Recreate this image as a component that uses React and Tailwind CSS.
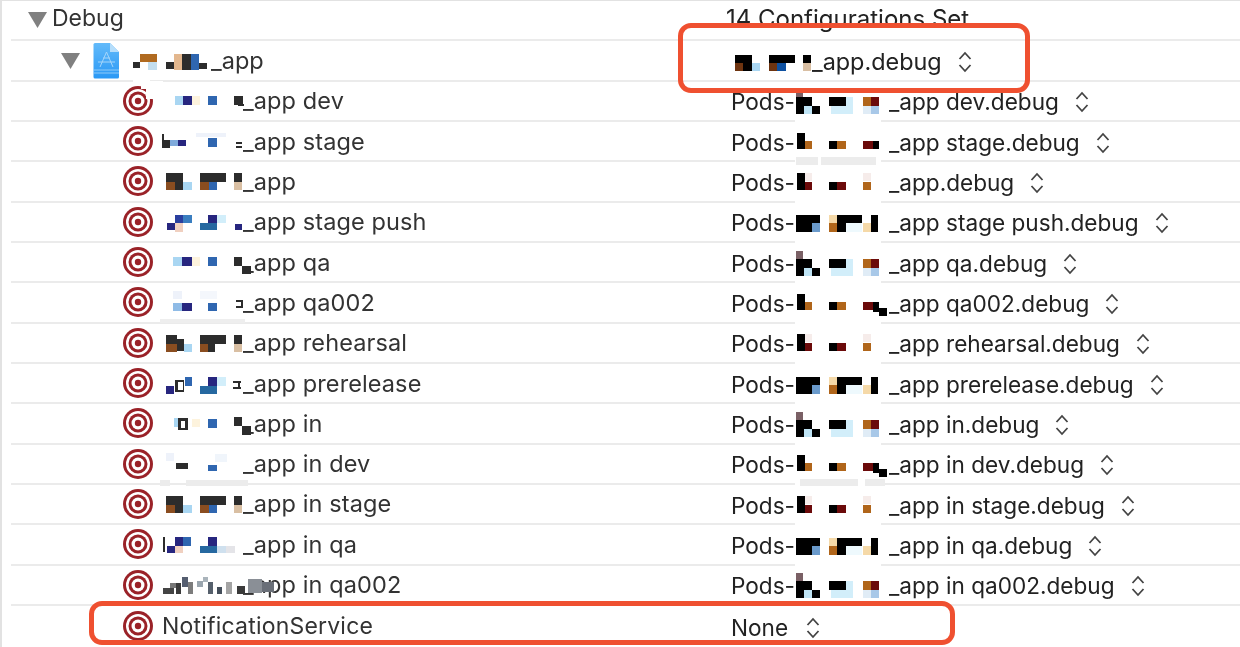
import React from "react";

const D = "#2c2c2c", B = "#000000", BR = "#8a4d20", PB = "#a9d6f2", NV = "#27267f", CR = "#fdf3dd", BL = "#2f66b0", TN = "#d9bfa3", TL = "#2668a0", PE = "#f5d9a8", OR = "#b0651a", RD = "#6b0a0a", PL = "#d2eefa", MV = "#7a6065", W = "#ffffff", G = "#ececec", PK = "#f6ecea";

const rC = [[166,-8,17,9,D],[166,1,9,8,BR],[175,1,8,8,D],[183,1,9,8,PB],[200,-8,26,9,D],[200,1,9,8,BR],[209,1,8,8,BL],[234,-8,8,9,D],[234,1,8,8,TN]];

const L = [
  [[133,-22,17,5,W],[146,-16,8,14,W],[141,-16,13,4,W],[175,-5,8,9,PB],[183,-5,9,9,NV],[192,-5,8,9,CR],[208,-5,9,9,BL],[234,-5,9,9,D],[238,3,6,2,D],[145,-20,18,3,W]],
  [[162,-7,2,14,D],[164,-1,6,8,D],[170,-1,8,6,"#7faadc"],[178,-1,8,6,NV],[208,-3,9,9,BL],[196,-8,30,4,"#eef2fa"],[235,-1,8,8,W],[236,1,6,2,D],[236,5,6,2,D]],
  rC,
  [[167,1,8,7,NV],[175,-7,8,8,"#2a3f9f"],[183,-7,9,8,"#3a7ec0"],[175,1,8,9,"#f0d0c0"],[200,1,8,7,TL],[208,-7,9,8,NV],[208,1,9,7,TL],[217,-7,9,8,PL],[235,2,7,6,NV]],
  [[173,-5,9,9,PB],[182,-5,10,9,NV],[192,-5,8,9,CR],[208,-5,9,9,BL],[234,-5,8,9,D],[243,-10,8,22,W],[242,4,9,8,D]],
  [[173,-11,9,8,"#eef2fa"],[173,1,9,8,"#8fbbe6"],[182,1,10,8,NV],[208,1,9,8,BL],[200,-11,17,8,"#f4f7fc"],[160,17,85,4,"#eeeeee"],[236,-2,7,2,D],[236,4,7,2,D],[241,-2,2,8,D]],
  [[166,-8,11,9,D],[166,1,11,8,BR],[177,-4,7,12,D],[184,1,8,8,PB],[200,-8,26,9,D],[200,1,8,8,BR],[208,1,7,8,D],[234,-8,8,9,D],[234,1,8,8,TN]],
  [[166,3,8,8,NV],[175,-3,9,12,D],[178,-1,5,8,W],[185,-6,7,9,BL],[200,3,17,8,TL],[208,-6,9,9,NV],[217,-6,9,9,PL],[233,-2,8,2,D],[233,4,8,2,D],[238,-2,2,8,D]],
  [[174,-5,4,9,PB],[178,-5,10,12,D],[181,-2,4,7,W],[192,-4,8,8,CR],[208,-4,9,9,BL],[234,-6,8,9,D],[242,3,9,9,D]],
  [[166,-11,8,8,"#eef2fa"],[176,-1,12,6,D],[208,1,9,6,BL],[215,-10,12,8,"#f0f5fb"],[160,16,10,6,G],[186,16,62,6,G]],
  rC,
  [[163,-7,2,15,D],[167,2,8,7,NV],[175,-7,8,9,NV],[183,-7,8,9,BL],[175,2,8,7,"#f0d0c0"],[200,2,8,7,TL],[208,-7,9,9,NV],[208,2,9,7,TL],[217,2,9,7,"#cfe0ee"],[226,2,9,7,"#e4e4e8"]],
  [[163,3,11,6,"#444444"],[170,-2,6,5,"#777777"],[176,-2,5,11,"#3a3a3a"],[182,-8,6,10,"#555e70"],[188,-3,5,12,"#7c7c7c"],[197,-4,6,6,"#9aa5ae"],[203,-8,5,5,"#aab4bb"],[208,-3,5,12,"#56606c"],[217,2,5,7,"#444e5a"],[226,-3,6,12,"#a4a4a4"],[237,1,8,8,"#3a3a3a"],[248,-6,14,14,"#8a8f96"],[262,-3,12,10,"#6a6f78"]],
];

const rQA = [[796,-13,7,8,MV],[796,-5,16,9,B],[796,4,8,8,B],[804,4,8,8,"#bfe4f5"],[812,4,8,8,B],[829,-5,17,9,B],[846,-5,7,9,PL],[831,4,22,8,PL],[863,-5,8,9,OR],[871,-5,8,9,RD],[871,4,8,8,"#a8c8e8"],[863,4,8,8,"#e0ecf6"]];
const rST = [[797,-10,8,16,B],[805,-2,7,8,OR],[829,-2,8,8,B],[837,-2,9,8,OR],[863,-2,10,8,RD],[873,-2,6,8,B]];
const rAP = [[805,-10,7,8,PK],[863,-10,8,8,PK],[797,-10,8,17,B],[805,-1,7,8,RD],[829,-1,8,8,B],[837,-1,9,8,RD],[863,-1,8,8,OR]];
const rPU = [[796,-8,24,8,B],[796,0,16,9,B],[812,0,8,9,"#6a9acb"],[829,-8,8,8,PE],[829,0,8,9,OR],[837,-8,9,17,B],[846,-8,16,8,B],[846,0,16,9,"#eef9fd"],[863,0,8,9,PE],[871,-8,7,17,B]];
const rQ2 = [...rST,[873,2,6,6,B],[879,4,8,8,B]];

const cover = [[795,16,86,5,W]];
const gray = [[795,16,86,5,W],[796,14,22,8,G],[821,14,55,8,G]];

const R = [rQA, rST, rAP, rPU, rQA, rQ2, rAP, rPU, rQA, rQ2, rAP, rPU, rQA];

const rows = [
  ["_app dev", "_app dev.debug"],
  ["_app stage", "_app stage.debug", gray],
  ["_app", "_app.debug"],
  ["_app stage push", "_app stage push.debug"],
  ["_app qa", "_app qa.debug"],
  ["_app qa002", "_app qa002.debug"],
  ["_app rehearsal", "_app rehearsal.debug"],
  ["_app prerelease", "_app prerelease.debug"],
  ["_app in", "_app in.debug"],
  ["_app in dev", "_app in dev.debug", [[795,16,86,5,W],[800,14,58,7,G],[865,14,20,7,G]]],
  ["_app in stage", "_app in stage.debug"],
  ["_app in qa", "_app in qa.debug"],
  ["_app in qa002", "_app in qa002.debug"],
];

function Mosaic({ x0, w, rects }) {
  return (
    <svg width={w} height="40" viewBox={`${x0} -20 ${w} 40`} className="relative z-10 shrink-0 overflow-visible">
      {rects.map((r, i) => <rect key={i} x={r[0]} y={r[1]} width={r[2]} height={r[3]} fill={r[4]} />)}
    </svg>
  );
}

function Target() {
  return (
    <svg width="30" height="30" viewBox="0 0 30 30" className="shrink-0">
      <circle cx="15" cy="15" r="15" fill="#9a2228" />
      <circle cx="15" cy="15" r="12" fill="#fff" />
      <circle cx="15" cy="15" r="9.5" fill="#9a2228" />
      <circle cx="15" cy="15" r="6.5" fill="#fff" />
      <circle cx="15" cy="15" r="3.2" fill="#9a2228" />
    </svg>
  );
}

function Tri({ className }) {
  return (
    <svg width="19" height="16" viewBox="0 0 19 16" className={className}>
      <path d="M0 0H19L9.5 16Z" fill="#808080" />
    </svg>
  );
}

function Updown() {
  return (
    <svg width="14" height="22" viewBox="0 0 14 22" className="ml-[16px] shrink-0" fill="none" stroke="#444" strokeWidth="1.8">
      <path d="M1.5 8L7 2L12.5 8" />
      <path d="M1.5 14L7 20L12.5 14" />
    </svg>
  );
}

function Project() {
  return (
    <svg width="27" height="36" viewBox="0 0 27 36" className="shrink-0">
      <defs>
        <linearGradient id="pg" x1="0" y1="0" x2="0" y2="1">
          <stop offset="0" stopColor="#62bafa" />
          <stop offset="1" stopColor="#2a98f5" />
        </linearGradient>
      </defs>
      <path d="M2 0H17L26 9V34Q26 35.500 24.500 35.500H2Q0.500 35.500 0.500 34V1.500Q0.500 0 2 0Z" fill="url(#pg)" />
      <path d="M17 0L26 9H17Z" fill="#b6defb" />
      <path d="M1 27H26M1 30H26" stroke="#a5d5fa" strokeWidth="0.8" />
      <path d="M7 24L13.500 9L20 24M5 19H22M10 15H17" stroke="#a5d5fa" strokeWidth="1" fill="none" />
    </svg>
  );
}

const line = "h-[40.33px] ml-[11px] flex items-center border-b-2 border-[#ebebeb]";
const font = "font-['Inter','Liberation_Sans',sans-serif]";

export default function App() {
  return (
    <div className={`relative h-[647px] w-[1240px] overflow-hidden bg-white border-l-2 border-t border-[#e2e2e2] text-[22.6px] text-[#333] ${font}`}>
      <div className="-ml-[2px] blur-[0.4px]">
        <div className={line}>
          <div className="w-[720px] shrink-0 flex items-center pl-[17px] gap-[5px]">
            <Tri />
            <span className="-translate-y-[2px] text-[23px]">Debug</span>
          </div>
          <span className="-ml-[5px] -translate-y-[1px] text-[24px] text-[#222]">14 Configurations Set</span>
        </div>
        <div className={line}>
          <div className="w-[720px] shrink-0 flex items-center pl-[50px]">
            <Tri className="shrink-0" />
            <span className="ml-[13px] flex"><Project /></span>
            <span className="ml-[11px] flex items-center">
              <Mosaic x0={131} w={81} rects={[[133,1,7,6,D],[140,-7,8,8,"#b06a20"],[148,-7,9,8,"#b06a20"],[148,1,9,8,"#c3deef"],[166,1,8,7,D],[174,-7,8,8,"#e3b78e"],[174,1,8,8,"#e3b78e"],[182,-7,9,16,D],[191,-7,8,16,BL],[199,2,8,6,D]]} />
              <span className="-ml-[1px] text-[23.5px]">_app</span>
            </span>
          </div>
          <div className="flex items-center pt-[3px] text-[#222]">
            <Mosaic x0={731} w={81} rects={[[735,-7,17,8,B],[735,1,8,8,"#6e3410"],[743,1,9,8,B],[752,1,8,8,PB],[769,-7,26,8,B],[769,1,8,8,"#6e3410"],[777,1,9,8,"#0d50a0"],[803,-7,8,8,B],[803,1,8,8,TN]]} />
            <span className="text-[23.4px]">_app.debug</span>
            <Updown />
          </div>
        </div>
        {rows.map((r, i) => (
          <div key={i} className={line}>
            <div className="w-[720px] shrink-0 flex items-center pl-[112px] relative">
              <Target />
              <span className="ml-[9px] flex items-center">
                <Mosaic x0={162} w={81} rects={L[i]} />
                <span className="text-[23.5px] tracking-[0.1px]">{r[0]}</span>
              </span>
            </div>
            <div className="flex items-center pt-[3px] text-[#222]">
              <span className="w-[64px] shrink-0">Pods-</span>
              <Mosaic x0={795} w={94} rects={[...(r[2] || cover), ...R[i]]} />
              <span>{r[1]}</span>
              <Updown />
            </div>
          </div>
        ))}
        <div className="h-[40.33px] ml-[11px] flex items-center">
          <div className="w-[720px] shrink-0 flex items-center pl-[112px]">
            <Target />
            <span className="ml-[9px] text-[23px] tracking-[0.2px]">NotificationService</span>
          </div>
          <div className="flex items-center pt-[3px] text-[#222]">
            <span>None</span>
            <span className="flex ml-[2px]"><Updown /></span>
          </div>
        </div>
      </div>
      <div className="absolute left-[676px] top-[22px] h-[70px] w-[352px] rounded-[13px] border-[5px] border-[#ef5030]" />
      <div className="absolute left-[87px] top-[600px] h-[44px] w-[866px] rounded-[13px] border-[5px] border-[#ef5030]" />
    </div>
  );
}
